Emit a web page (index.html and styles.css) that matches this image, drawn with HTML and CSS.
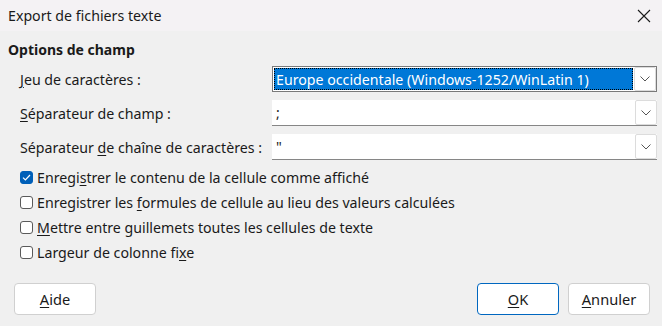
FILE: index.html
```html
<!DOCTYPE html>
<html lang="fr">
<head>
  <meta charset="UTF-8">
  <title>Export de fichiers texte</title>
  <link rel="stylesheet" href="styles.css">
</head>
<body>
  <div class="dialog">
    <div class="titlebar">
      <span class="title">Export de fichiers texte</span>
      <svg class="close" width="14" height="14" viewBox="0 0 14 14">
        <path d="M1 1 L13 13 M13 1 L1 13" stroke="#1a1a1a" stroke-width="1.1" fill="none"/>
      </svg>
    </div>

    <div class="content">
      <h2 class="section">Options de champ</h2>

      <div class="fields">
        <div class="field">
          <label class="label"><u>J</u>eu de caractères :</label>
          <div class="combo focused">
            <div class="value"><span class="sel">Europe occidentale (Windows-1252/WinLatin 1)</span></div>
            <div class="drop">
              <svg width="10" height="6" viewBox="0 0 10 6"><path d="M0.5 0.5 L5 5 L9.5 0.5" stroke="#555" stroke-width="1" fill="none"/></svg>
            </div>
          </div>
        </div>
        <div class="field">
          <label class="label"><u>S</u>éparateur de champ :</label>
          <div class="combo">
            <div class="value">;</div>
            <div class="drop">
              <svg width="10" height="6" viewBox="0 0 10 6"><path d="M0.5 0.5 L5 5 L9.5 0.5" stroke="#555" stroke-width="1" fill="none"/></svg>
            </div>
          </div>
        </div>
        <div class="field">
          <label class="label">Séparateur <u>d</u>e chaîne de caractères :</label>
          <div class="combo">
            <div class="value">"</div>
            <div class="drop">
              <svg width="10" height="6" viewBox="0 0 10 6"><path d="M0.5 0.5 L5 5 L9.5 0.5" stroke="#555" stroke-width="1" fill="none"/></svg>
            </div>
          </div>
        </div>
      </div>

      <div class="checks">
        <label class="check"><span class="box checked">
          <svg width="9" height="7" viewBox="0 0 9 7"><path d="M1 3.6 L3.4 6 L8 1" stroke="#fff" stroke-width="1.2" fill="none"/></svg>
        </span><span>Enregi<u>s</u>trer le contenu de la cellule comme affiché</span></label>
        <label class="check"><span class="box"></span><span>Enregistrer les <u>f</u>ormules de cellule au lieu des valeurs calculées</span></label>
        <label class="check"><span class="box"></span><span><u>M</u>ettre entre guillemets toutes les cellules de texte</span></label>
        <label class="check"><span class="box"></span><span>Largeur de colonne fi<u>x</u>e</span></label>
      </div>
    </div>

    <div class="buttons">
      <button class="btn"><u>A</u>ide</button>
      <div class="right">
        <button class="btn default"><u>O</u>K</button>
        <button class="btn"><u>A</u>nnuler</button>
      </div>
    </div>
  </div>
</body>
</html>
```

FILE: styles.css
```css
* {
  margin: 0;
  padding: 0;
  box-sizing: border-box;
}

body, html {
  width: 100%;
  height: 100%;
  font-family: "Noto Sans", "Open Sans", sans-serif;
  font-size: 14.2px;
  color: #1a1a1a;
  background: #f0f0f0;
}

.dialog {
  display: flex;
  flex-direction: column;
  height: 326px;
}

u {
  text-decoration-thickness: 1px;
  text-underline-offset: 2px;
}

.titlebar {
  height: 31px;
  background: #f4f2f4;
  display: flex;
  align-items: center;
  justify-content: space-between;
  padding: 0 11px 0 8px;
}

.title {
  font-size: 14.2px;
}

.content {
  padding: 0 5px 0 8px;
}

.section {
  font-size: 14px;
  font-weight: bold;
  margin-top: 9px;
  height: 24px;
  line-height: 20px;
}

.fields {
  display: flex;
  flex-direction: column;
  gap: 8px;
  padding-top: 2px;
}

.field {
  display: flex;
  align-items: center;
  height: 26px;
}

.label {
  width: 264px;
  padding-left: 12px;
}

.combo {
  width: 385px;
  height: 26px;
  display: flex;
  background: #fff;
  border-bottom: 1px solid #868686;
}

.combo.focused {
  border: 1px solid #7a7a7a;
}

.value {
  flex: 1;
  display: flex;
  align-items: center;
  padding-left: 4px;
}

.focused .value {
  padding: 1px;
}

.sel {
  flex: 1;
  height: 100%;
  display: flex;
  align-items: center;
  padding-left: 2px;
  background: #0078d7;
  color: #fff;
  outline: 1px dotted #000;
  outline-offset: -1px;
}

.drop {
  width: 22px;
  display: flex;
  align-items: center;
  justify-content: center;
  border: 1px solid #dcdcdc;
  border-radius: 2px;
  background: #fff;
}

.checks {
  display: flex;
  flex-direction: column;
  margin-top: 5px;
}

.check {
  display: flex;
  align-items: center;
  height: 25px;
  padding-left: 12px;
}

.box {
  width: 13px;
  height: 13px;
  border: 1px solid #5a5a5a;
  border-radius: 3px;
  background: #fff;
  margin-right: 4px;
  display: flex;
  align-items: center;
  justify-content: center;
}

.box.checked {
  background: #005fb8;
  border-color: #005fb8;
}

.buttons {
  display: flex;
  justify-content: space-between;
  padding: 0 12px 0 14px;
  margin-top: auto;
  margin-bottom: 11px;
}

.right {
  display: flex;
  gap: 9px;
}

.btn {
  width: 82px;
  height: 32px;
  font-family: inherit;
  font-size: 14.6px;
  color: #1a1a1a;
  background: #fff;
  border: 1px solid #d0d0d0;
  border-radius: 4px;
}

.btn.default {
  border-color: #0067c0;
}
```
